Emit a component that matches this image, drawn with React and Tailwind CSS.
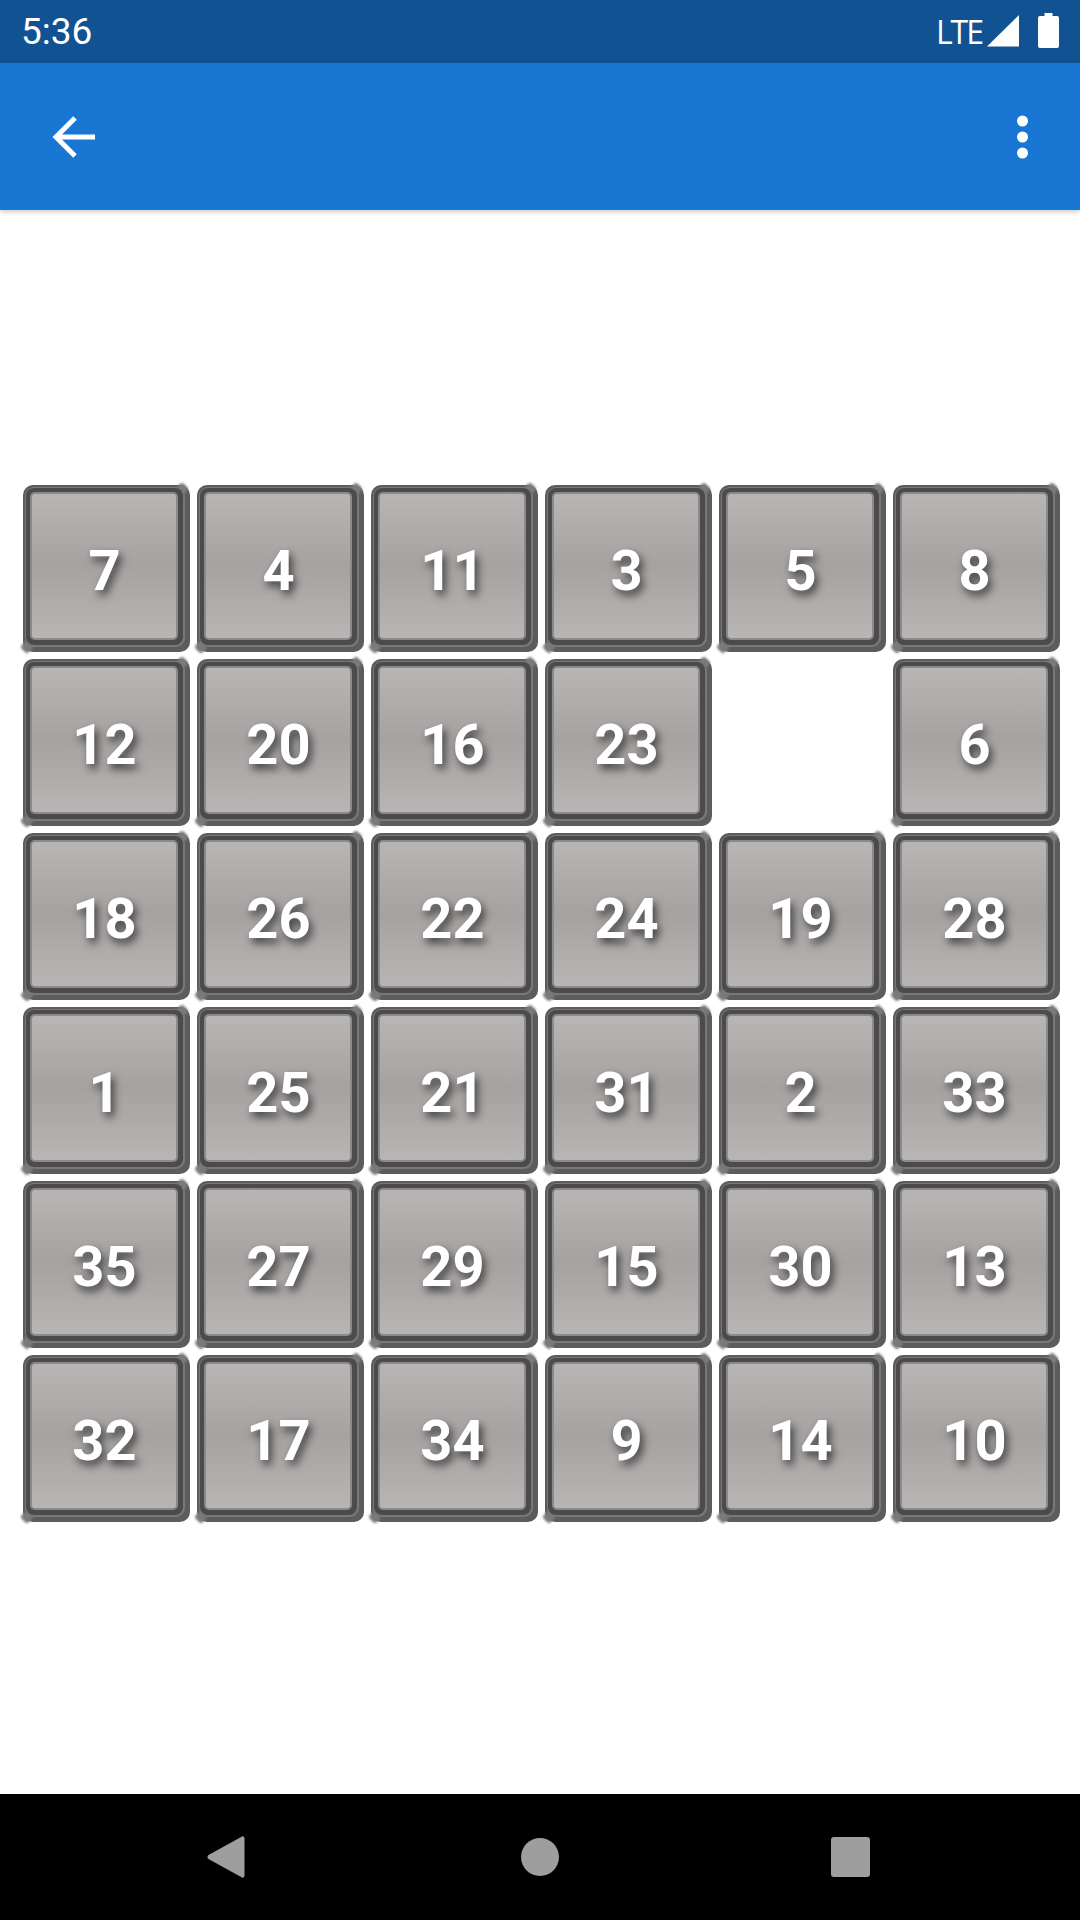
import React from "react";

const rows = [
  [7, 4, 11, 3, 5, 8],
  [12, 20, 16, 23, null, 6],
  [18, 26, 22, 24, 19, 28],
  [1, 25, 21, 31, 2, 33],
  [35, 27, 29, 15, 30, 13],
  [32, 17, 34, 9, 14, 10],
];

function Tile({ n }) {
  if (n === null) return <div className="w-[168px] h-[168px]" />;
  return (
    <div className="w-[168px] h-[168px] pt-[1px] pl-[1px]">
      <div className="relative w-[167px] h-[167px] rounded-[10px] bg-[#5c5c5c] pt-[2px] pl-[2px] pr-[5px] pb-[5px]">
        {/* Soft bevel tips on the top-right and bottom-left corners */}
        <span className="absolute -top-[1px] right-[3px] w-[10px] h-[10px] rounded-[3px] rotate-45 bg-[#7a7a7a] blur-[0.8px]" />
        <span className="absolute bottom-0 -left-[1px] w-[10px] h-[10px] rounded-[3px] rotate-45 bg-[#7a7a7a] blur-[0.8px]" />
        <div className="relative w-full h-full rounded-[9px] bg-[#787878] pt-[1px] pl-[1px] pr-[2px] pb-[2px]">
          <div className="w-full h-full rounded-[8px] bg-[#4b4b4b] pt-[4px] pl-[4px] pr-[5px] pb-[5px]">
            <div className="w-full h-full rounded-[5px] bg-[#8a8a8a] p-[2px]">
              <div className="w-full h-full rounded-[3px] flex items-center justify-center pt-[9px] pl-[1px] bg-[linear-gradient(180deg,#b9b5b4_0%,#a5a2a1_50%,#b9b5b4_100%)]">
                <span className="font-['Roboto',sans-serif] font-bold text-[56px] leading-none text-white [text-shadow:3px_5px_8px_rgba(0,0,0,0.65)]">
                  {n}
                </span>
              </div>
            </div>
          </div>
        </div>
      </div>
    </div>
  );
}

export default function App() {
  return (
    <div className="w-[1080px] h-[1920px] flex flex-col bg-white overflow-hidden font-['Roboto',sans-serif]">
      <div className="h-[63px] bg-[#115293] flex items-center justify-between pl-[21px] pr-[21px] text-white">
        <span className="text-[37px] leading-none font-normal">5:36</span>
        <div className="flex items-center">
          <span className="text-[32px] leading-none tracking-[-2px] font-['Open_Sans',sans-serif] mr-[4px]">LTE</span>
          <svg width="34" height="34" viewBox="0 0 34 34" className="mr-[18px] -mt-[2px]">
            <path d="M1 32.500 33 1v31.500z" fill="#fff" />
          </svg>
          <svg width="21" height="35" viewBox="0 0 21 35" className="-mt-[2px]">
            <path d="M6.500 0h8v3H19a2 2 0 0 1 2 2v28a2 2 0 0 1-2 2H2a2 2 0 0 1-2-2V5a2 2 0 0 1 2-2h4.500z" fill="#fff" />
          </svg>
        </div>
      </div>
      <div className="h-[147px] bg-[#1976d2] flex items-center justify-between pl-[52px] pr-[20px] shadow-[0_2px_5px_rgba(0,0,0,0.2)] relative z-10">
        <svg width="44" height="44" viewBox="0 0 44 44">
          <path d="M43 22H3M23 3 4 22l19 19" fill="none" stroke="#fff" strokeWidth="5" />
        </svg>
        <svg width="60" height="60" viewBox="0 0 60 60">
          <circle cx="22.500" cy="14" r="5.500" fill="#fff" />
          <circle cx="22.500" cy="30" r="5.500" fill="#fff" />
          <circle cx="22.500" cy="46" r="5.500" fill="#fff" />
        </svg>
      </div>
      <main className="flex-1 pt-[274px] pl-[22px]">
        <div className="grid grid-cols-[repeat(6,168px)] gap-[6px]">
          {rows.flat().map((n, i) => (
            <Tile key={i} n={n} />
          ))}
        </div>
      </main>
      <div className="h-[126px] bg-black flex items-center">
        <svg width="38" height="44" viewBox="0 0 38 44" className="ml-[207px]">
          <path d="M35 1.500a2 2 0 0 1 2.500 1.500v38a2 2 0 0 1-2.500 1.500L1.500 24a2.500 2.500 0 0 1 0-4z" fill="#9e9e9e" />
        </svg>
        <div className="w-[38px] h-[38px] rounded-full bg-[#9e9e9e] ml-[276px]" />
        <div className="w-[39px] h-[40px] rounded-[3px] bg-[#9e9e9e] ml-[272px]" />
      </div>
    </div>
  );
}
